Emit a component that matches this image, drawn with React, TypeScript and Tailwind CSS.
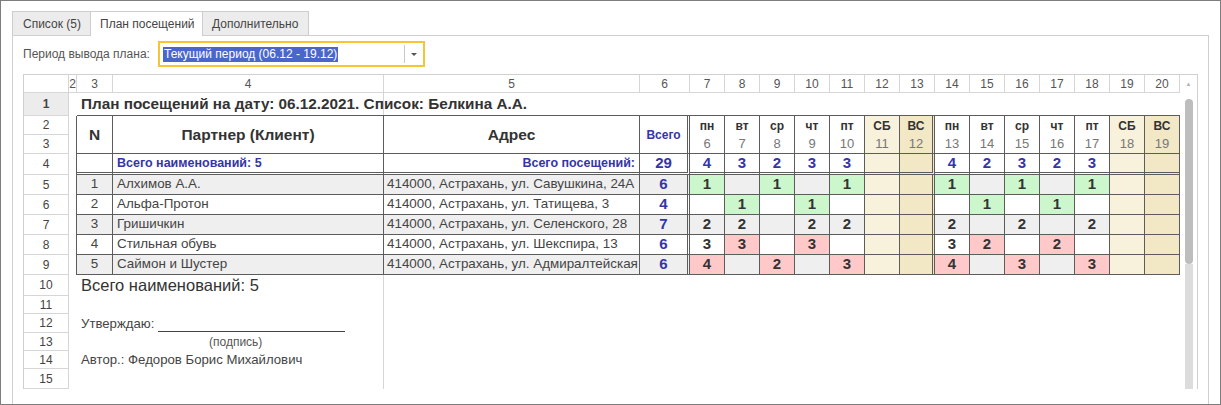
import React from 'react'

type Mark = 'g' | 'p' | undefined
type Day = [number | null, Mark?]

const weekdays = ['пн', 'вт', 'ср', 'чт', 'пт', 'СБ', 'ВС', 'пн', 'вт', 'ср', 'чт', 'пт', 'СБ', 'ВС']
const dates = [6, 7, 8, 9, 10, 11, 12, 13, 14, 15, 16, 17, 18, 19]
const dayTotals = [4, 3, 2, 3, 3, null, null, 4, 2, 3, 2, 3, null, null]

const _: Day = [null]

const clients: { n: number; name: string; addr: string; total: number; days: Day[] }[] = [
  {
    n: 1,
    name: 'Алхимов А.А.',
    addr: '414000, Астрахань, ул. Савушкина, 24А',
    total: 6,
    days: [[1, 'g'], _, [1, 'g'], _, [1, 'g'], _, _, [1, 'g'], _, [1, 'g'], _, [1, 'g'], _, _],
  },
  {
    n: 2,
    name: 'Альфа-Протон',
    addr: '414000, Астрахань, ул. Татищева, 3',
    total: 4,
    days: [_, [1, 'g'], _, [1, 'g'], _, _, _, _, [1, 'g'], _, [1, 'g'], _, _, _],
  },
  {
    n: 3,
    name: 'Гришичкин',
    addr: '414000, Астрахань, ул. Селенского, 28',
    total: 7,
    days: [[2], [2], _, [2], [2], _, _, [2], _, [2], _, [2], _, _],
  },
  {
    n: 4,
    name: 'Стильная обувь',
    addr: '414000, Астрахань, ул. Шекспира, 13',
    total: 6,
    days: [[3], [3, 'p'], _, [3, 'p'], _, _, _, [3], [2, 'p'], _, [2, 'p'], _, _, _],
  },
  {
    n: 5,
    name: 'Саймон и Шустер',
    addr: '414000, Астрахань, ул. Адмиралтейская',
    total: 6,
    days: [[4, 'p'], _, [2, 'p'], _, [3, 'p'], _, _, [4, 'p'], _, [3, 'p'], _, [3, 'p'], _, _],
  },
]

// weekend columns: 5,12 = суббота, 6,13 = воскресенье
function dayBg(i: number, mark: Mark, shaded: boolean) {
  if (mark === 'g') return 'bg-[#ccf7cc]'
  if (mark === 'p') return 'bg-[#ffc9c9]'
  if (i === 5 || i === 12) return 'bg-[#f8f1dc]'
  if (i === 6 || i === 13) return 'bg-[#f2e8c5]'
  return shaded ? 'bg-[#efefef]' : 'bg-white'
}

// right border of a day column: double line after the first Sunday
function dayRight(i: number) {
  return i === 6 ? 'border-r-[3px] border-double' : 'border-r'
}

function RowHead({ n, h, sel }: { n?: number; h: string; sel?: boolean }) {
  return (
    <div
      className={`${h} w-[45px] shrink-0 border-r border-b border-[#d6d6d6] flex items-center justify-center text-[12px] text-[#444] ${
        sel ? 'bg-[#ececec] font-bold' : ''
      }`}
    >
      {n}
    </div>
  )
}

function Tabs() {
  return (
    <div className="flex items-start h-[25px] text-[12px] text-[#444]">
      <div className="h-[24px] w-[78px] border-t border-l border-[#cdcdcd] bg-[#ececec] flex items-center pl-[10px]">
        Список (5)
      </div>
      <div className="relative z-10 h-[25px] w-[113px] border-t border-l border-r border-[#cdcdcd] bg-white flex items-center pl-[9px]">
        План посещений
      </div>
      <div className="h-[24px] w-[106px] border-t border-r border-[#cdcdcd] bg-[#ececec] flex items-center pl-[9px]">
        Дополнительно
      </div>
    </div>
  )
}

function PeriodRow() {
  return (
    <div className="flex items-center mt-[5px] h-[26px]">
      <div className="w-[135px] text-[12px] text-[#555]">Период вывода плана:</div>
      <div className="w-[267px] h-[26px] border-2 border-[#f7c533] flex items-center pl-[3px]">
        <span className="bg-[#4a66cb] text-white text-[12px] leading-[15px] pl-[1px] pr-[1px]">
          Текущий период (06.12 - 19.12)
        </span>
        <div className="ml-auto w-px h-[18px] bg-[#c8c8c8]" />
        <div className="w-[18px] flex items-center justify-center">
          <div className="w-0 h-0 border-l-[3px] border-r-[3px] border-t-[3px] border-l-transparent border-r-transparent border-t-[#555]" />
        </div>
      </div>
    </div>
  )
}

const colHeads: [string, string][] = [
  ['2', 'w-[8px]'],
  ['3', 'w-[36px]'],
  ['4', 'w-[271px]'],
  ['5', 'w-[256px]'],
  ['6', 'w-[50px]'],
]

function Sheet() {
  const D = 'border-[#5c5c5c]'
  return (
    <div className="mt-[7px] flex w-[1175px] h-[315px] border-l border-t border-r border-[#d0d0d0] overflow-hidden">
      <div className="flex flex-col w-[1156px] shrink-0">
        {/* column numbers */}
        <div className="flex h-[18px] shrink-0">
          <RowHead h="h-[18px]" />
          {colHeads.map(([t, w]) => (
            <div
              key={t}
              className={`${w} shrink-0 overflow-hidden border-r border-b border-[#d6d6d6] flex items-center justify-center text-[12px] text-[#555]`}
            >
              {t}
            </div>
          ))}
          {dates.map((d, i) => (
            <div
              key={d}
              className="w-[35px] shrink-0 border-r border-b border-[#d6d6d6] flex items-center justify-center text-[12px] text-[#555]"
            >
              {i + 7}
            </div>
          ))}
        </div>

        {/* row 1: title */}
        <div className="flex h-[23px] shrink-0">
          <RowHead n={1} h="h-[23px]" sel />
          <div className="w-[8px] shrink-0" />
          <div className={`flex flex-1 border-b ${D}`}>
            <div className="relative z-10 w-[36px] shrink-0 flex items-center pl-[4px] whitespace-nowrap font-bold text-[15.3px] text-[#333]">
              План посещений на дату: 06.12.2021. Список: Белкина А.А.
            </div>
            <div className="w-[271px] shrink-0 border-r border-[#d6d6d6]" />
          </div>
        </div>

        {/* rows 2-3: table header */}
        <div className="flex h-[38px] shrink-0">
          <div className="flex flex-col">
            <RowHead n={2} h="h-[19px]" />
            <RowHead n={3} h="h-[19px]" />
          </div>
          <div className={`w-[8px] shrink-0 border-r ${D}`} />
          <div className={`w-[36px] shrink-0 border-r border-b ${D} flex items-center justify-center font-bold text-[15.5px]`}>
            N
          </div>
          <div className={`w-[271px] shrink-0 border-r border-b ${D} flex items-center justify-center font-bold text-[15.5px]`}>
            Партнер (Клиент)
          </div>
          <div className={`w-[256px] shrink-0 border-r border-b ${D} flex items-center justify-center font-bold text-[15.5px]`}>
            Адрес
          </div>
          <div
            className={`w-[50px] shrink-0 border-r-[3px] border-b border-double ${D} flex items-center justify-center font-bold text-[12px] text-[#3535a8]`}
          >
            Всего
          </div>
          {weekdays.map((w, i) => (
            <div key={i} className={`w-[35px] shrink-0 flex flex-col ${dayRight(i)} border-b ${D} ${dayBg(i, undefined, false)}`}>
              <div className="h-[19px] flex items-center justify-center font-bold text-[12px] text-[#333]">{w}</div>
              <div className="h-[18px] flex items-center justify-center text-[13px] text-[#777]">{dates[i]}</div>
            </div>
          ))}
        </div>

        {/* row 4: totals */}
        <div className="flex h-[21px] shrink-0">
          <RowHead n={4} h="h-[21px]" />
          <div className={`w-[8px] shrink-0 border-r ${D}`} />
          <div className={`w-[36px] shrink-0 border-r border-b-[3px] border-double ${D}`} />
          <div
            className={`w-[271px] shrink-0 border-r border-b-[3px] border-double ${D} flex items-center pl-[4px] font-bold text-[12.5px] text-[#3535a8] whitespace-nowrap`}
          >
            Всего наименований: 5
          </div>
          <div
            className={`w-[256px] shrink-0 border-r border-b-[3px] border-double ${D} flex items-center justify-end pr-[4px] font-bold text-[12.5px] text-[#3535a8] whitespace-nowrap`}
          >
            Всего посещений:
          </div>
          <div
            className={`w-[50px] shrink-0 border-r-[3px] border-b-[3px] border-double ${D} flex items-center justify-center font-bold text-[15px] text-[#3535a8]`}
          >
            29
          </div>
          {dayTotals.map((t, i) => (
            <div
              key={i}
              className={`w-[35px] shrink-0 ${dayRight(i)} border-b-[3px] border-double ${D} ${dayBg(i, undefined, false)} flex items-center justify-center font-bold text-[15px] text-[#3535a8]`}
            >
              {t}
            </div>
          ))}
        </div>

        {/* rows 5-9: clients */}
        {clients.map((c, r) => {
          const shaded = r % 2 === 0
          const bg = shaded ? 'bg-[#efefef]' : 'bg-white'
          return (
            <div key={c.n} className="flex h-[20px] shrink-0">
              <RowHead n={r + 5} h="h-[20px]" />
              <div className={`w-[8px] shrink-0 border-r ${D}`} />
              <div className={`w-[36px] shrink-0 border-r border-b ${D} ${bg} flex items-center justify-center text-[13.4px] text-[#444]`}>
                {c.n}
              </div>
              <div className={`w-[271px] shrink-0 border-r border-b ${D} ${bg} flex items-center pl-[4px] text-[13.4px] text-[#444] whitespace-nowrap`}>
                {c.name}
              </div>
              <div
                className={`w-[256px] shrink-0 overflow-hidden border-r border-b ${D} ${bg} flex items-center pl-[3px] text-[13.4px] text-[#444] whitespace-nowrap`}
              >
                {c.addr}
              </div>
              <div
                className={`w-[50px] shrink-0 border-r-[3px] border-b border-double ${D} ${bg} flex items-center justify-center font-bold text-[15px] text-[#3535a8]`}
              >
                {c.total}
              </div>
              {c.days.map(([v, m], i) => (
                <div
                  key={i}
                  className={`w-[35px] shrink-0 ${dayRight(i)} border-b ${D} ${dayBg(i, m, shaded)} flex items-center justify-center font-bold text-[15px] text-[#333]`}
                >
                  {v}
                </div>
              ))}
            </div>
          )
        })}

        {/* rows 10-15: footer */}
        <div className="flex h-[21px] shrink-0">
          <RowHead n={10} h="h-[21px]" />
          <div className="w-[8px] shrink-0" />
          <div className="relative z-10 w-[36px] shrink-0 flex items-center pl-[4px] whitespace-nowrap text-[16.5px] text-[#333]">
            Всего наименований: 5
          </div>
          <div className="w-[271px] shrink-0 border-r border-[#d6d6d6]" />
        </div>
        <div className="flex h-[18px] shrink-0">
          <RowHead n={11} h="h-[18px]" />
          <div className="w-[44px] shrink-0" />
          <div className="w-[271px] shrink-0 border-r border-[#d6d6d6]" />
        </div>
        <div className="flex h-[19px] shrink-0">
          <RowHead n={12} h="h-[19px]" />
          <div className="w-[8px] shrink-0" />
          <div className="relative z-10 w-[36px] shrink-0 flex items-center pl-[4px] whitespace-nowrap text-[13.2px] text-[#444]">
            Утверждаю:
            <span className="shrink-0 ml-[4px] mt-[2px] block w-[187px] h-[14px] border-b border-[#444]" />
          </div>
          <div className="w-[271px] shrink-0 border-r border-[#d6d6d6]" />
        </div>
        <div className="flex h-[18px] shrink-0">
          <RowHead n={13} h="h-[18px]" />
          <div className="w-[44px] shrink-0" />
          <div className="w-[271px] shrink-0 border-r border-[#d6d6d6] flex items-center pl-[96px] text-[12px] text-[#555]">
            (подпись)
          </div>
        </div>
        <div className="flex h-[18px] shrink-0">
          <RowHead n={14} h="h-[18px]" />
          <div className="w-[8px] shrink-0" />
          <div className="relative z-10 w-[36px] shrink-0 flex items-center pl-[4px] whitespace-nowrap text-[13.2px] text-[#444]">
            Автор.: Федоров Борис Михайлович
          </div>
          <div className="w-[271px] shrink-0 border-r border-[#d6d6d6]" />
        </div>
        <div className="flex h-[20px] shrink-0">
          <RowHead n={15} h="h-[20px]" />
          <div className="w-[44px] shrink-0" />
          <div className="w-[271px] shrink-0 border-r border-[#d6d6d6]" />
        </div>
      </div>

      {/* vertical scrollbar */}
      <div className="w-[17px] shrink-0 flex flex-col items-center">
        <div className="h-[18px] flex items-center justify-center text-[6px] text-[#b0b0b0]">▲</div>
        <div className="mt-[6px] w-[8px] h-[165px] rounded-[4px] bg-[#bdbdbd]" />
        <div className="w-[8px] flex-1 bg-[#dcdcdc]" />
      </div>
    </div>
  )
}

export default function App() {
  return (
    <div className="w-[1221px] h-[405px] overflow-hidden border border-[#7d7d7d] bg-white pt-[10px] pl-[11px] pr-[11px] font-['Liberation_Sans',Arial,sans-serif] text-[#333]">
      <Tabs />
      <div className="-mt-px h-[369px] border-l border-r border-t border-[#cfcfcf] pl-[10px] pr-[10px]">
        <PeriodRow />
        <Sheet />
      </div>
    </div>
  )
}
